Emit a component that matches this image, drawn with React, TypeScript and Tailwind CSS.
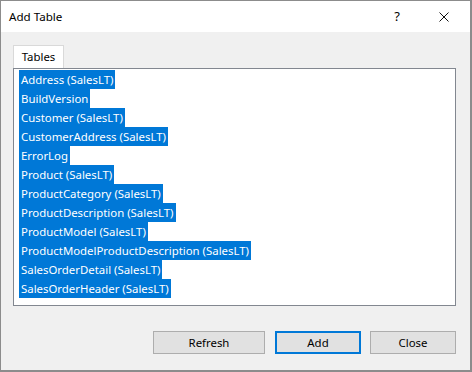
import React from "react";

const items = [
  "Address (SalesLT)",
  "BuildVersion",
  "Customer (SalesLT)",
  "CustomerAddress (SalesLT)",
  "ErrorLog",
  "Product (SalesLT)",
  "ProductCategory (SalesLT)",
  "ProductDescription (SalesLT)",
  "ProductModel (SalesLT)",
  "ProductModelProductDescription (SalesLT)",
  "SalesOrderDetail (SalesLT)",
  "SalesOrderHeader (SalesLT)",
];

export default function App() {
  return (
    <div
      className="w-[472px] h-[372px] flex flex-col border-l border-t border-r-2 border-b-2 border-[#8c8c8c] bg-[#f0f0f0] text-[11.4px] text-black"
      style={{ fontFamily: '"Noto Sans", "Open Sans", sans-serif' }}
    >
      <div className="h-[31px] bg-white flex items-center pl-[8px] shrink-0">
        <span className="text-[11.6px] leading-none">Add Table</span>
        <div className="flex-1" />
        <span className="text-[13px] leading-none mr-[39px]">?</span>
        <svg width="10" height="10" viewBox="0 0 10 10" className="mr-[21px]">
          <path d="M0.5 0.5 L9.5 9.5 M9.5 0.5 L0.5 9.5" stroke="#111" strokeWidth="1" fill="none" />
        </svg>
      </div>
      <div className="flex-1 flex flex-col px-[12px] pt-[13px]">
        <div className="flex">
          <div className="h-[23px] w-[51px] bg-white border-t border-l border-r border-[#d9d9d9] flex items-center justify-center leading-none">
            Tables
          </div>
        </div>
        <div className="w-[443px] h-[238px] bg-white border border-[#828790] pt-[1px] pl-[5px] flex flex-col items-start">
          {items.map((t) => (
            <div
              key={t}
              className="h-[19px] bg-[#0078d7] text-white px-[2px] flex items-center leading-none whitespace-nowrap"
            >
              {t}
            </div>
          ))}
        </div>
        <div className="flex mt-[25px] pl-[140px]">
          <button className="w-[112px] h-[23px] bg-[#e1e1e1] border border-[#adadad] leading-none">
            Refresh
          </button>
          <button className="w-[86px] h-[23px] ml-[10px] bg-[#e1e1e1] border-2 border-[#0078d7] leading-none">
            Add
          </button>
          <button className="w-[86px] h-[23px] ml-[9px] bg-[#e1e1e1] border border-[#adadad] leading-none">
            Close
          </button>
        </div>
      </div>
    </div>
  );
}
